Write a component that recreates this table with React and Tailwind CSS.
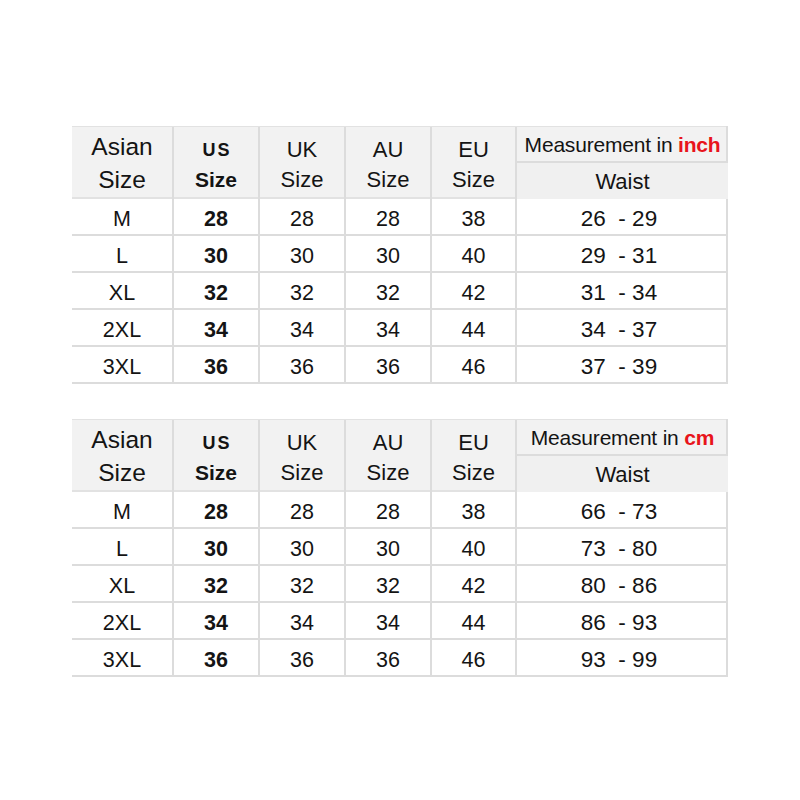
const COLS = "grid grid-cols-[102px_86px_86px_86px_85px_211px]";

const INCH = [
  ["M", "28", "28", "28", "38", "26  - 29"],
  ["L", "30", "30", "30", "40", "29  - 31"],
  ["XL", "32", "32", "32", "42", "31  - 34"],
  ["2XL", "34", "34", "34", "44", "34  - 37"],
  ["3XL", "36", "36", "36", "46", "37  - 39"],
];

const CM = [
  ["M", "28", "28", "28", "38", "66  - 73"],
  ["L", "30", "30", "30", "40", "73  - 80"],
  ["XL", "32", "32", "32", "42", "80  - 86"],
  ["2XL", "34", "34", "34", "44", "86  - 93"],
  ["3XL", "36", "36", "36", "46", "93  - 99"],
];

function HeadCell({ children, className = "" }) {
  return (
    <div className={`row-span-2 flex flex-col items-center justify-center border-r-2 border-[#dcdcdc] ${className}`}>
      {children}
    </div>
  );
}

function SizeTable({ unit, rows }) {
  return (
    <div className="w-[656px] border-r-2 border-[#dcdcdc] text-[#141414]">
      <div className={`${COLS} grid-rows-[36px_36px] h-[73px] bg-[#f2f2f2] border-t border-b-2 border-[#e2e2e2]`}>
        <HeadCell className="text-[24.5px] leading-[33px]">
          <span>Asian</span>
          <span>Size</span>
        </HeadCell>
        <HeadCell className="font-bold leading-[30px] pt-[3px]">
          <span className="text-[18px] tracking-[2px] pl-[2px]">US</span>
          <span className="text-[21px]">Size</span>
        </HeadCell>
        <HeadCell className="text-[22px] leading-[30px] pt-[3px]">
          <span>UK</span>
          <span>Size</span>
        </HeadCell>
        <HeadCell className="text-[22px] leading-[30px] pt-[3px]">
          <span>AU</span>
          <span>Size</span>
        </HeadCell>
        <HeadCell className="text-[22px] leading-[30px] pt-[3px]">
          <span>EU</span>
          <span>Size</span>
        </HeadCell>
        <div className="flex items-center justify-center border-b-2 border-[#dcdcdc] text-[21px] tracking-[-0.2px] pt-[2px]">
          Measurement in&nbsp;<span className="font-bold text-[#e8141b]">{unit}</span>
        </div>
        <div className="flex items-center justify-center text-[22px] bg-[#f0f0f0]">Waist</div>
      </div>
      {rows.map((r) => (
        <div key={r[0]} className={`${COLS} h-[37px] border-b-2 border-[#dcdcdc] text-[21.5px]`}>
          {r.map((v, i) => (
            <div
              key={i}
              className={`flex items-center justify-center whitespace-pre pt-[3px] ${i < 5 ? "border-r-2 border-[#dcdcdc]" : "text-[22.5px] pr-[7px]"} ${i === 1 ? "font-bold" : ""}`}
            >
              {v}
            </div>
          ))}
        </div>
      ))}
    </div>
  );
}

export default function App() {
  return (
    <main className="min-h-screen w-[800px] bg-white pt-[126px] pl-[72px] flex flex-col gap-[35px] font-['Liberation_Sans',Arial,sans-serif]">
      <SizeTable unit="inch" rows={INCH} />
      <SizeTable unit="cm" rows={CM} />
    </main>
  );
}
